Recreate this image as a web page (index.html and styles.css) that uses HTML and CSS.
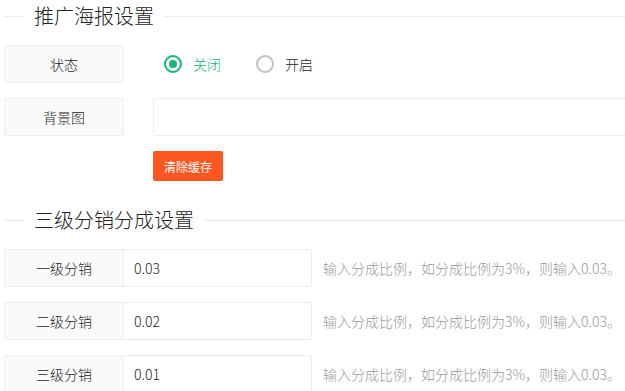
FILE: index.html
```html
<!DOCTYPE html>
<html lang="zh-CN">
<head>
    <meta charset="UTF-8">
    <meta name="viewport" content="width=device-width, initial-scale=1.0">
    <title>推广设置</title>
    <link rel="stylesheet" href="styles.css">
</head>
<body>

    <div class="page">
        <!-- 推广海报 -->
        <div class="field-title"><span>推广海报设置</span></div>

        <div class="form-item">
            <label class="form-label">状态</label>
            <div class="radio-group">
                <span class="radio checked"><i class="radio-icon"></i>关闭</span>
                <span class="radio"><i class="radio-icon"></i>开启</span>
            </div>
        </div>

        <div class="form-item">
            <label class="form-label">背景图</label>
            <div class="input-block">
                <input type="text" class="input wide">
            </div>
        </div>

        <div class="form-item btn-row">
            <button class="btn btn-danger">清除缓存</button>
        </div>

        <!-- 三级分销 -->
        <div class="field-title"><span>三级分销分成设置</span></div>

        <div class="form-item">
            <label class="form-label">一级分销</label>
            <input type="text" class="input rate" value="0.03">
            <div class="form-mid">输入分成比例，如分成比例为3%，则输入0.03。</div>
        </div>

        <div class="form-item">
            <label class="form-label">二级分销</label>
            <input type="text" class="input rate" value="0.02">
            <div class="form-mid">输入分成比例，如分成比例为3%，则输入0.03。</div>
        </div>

        <div class="form-item">
            <label class="form-label">三级分销</label>
            <input type="text" class="input rate" value="0.01">
            <div class="form-mid">输入分成比例，如分成比例为3%，则输入0.03。</div>
        </div>
    </div>

</body>
</html>
```

FILE: styles.css
```css
/* General */
* {
    margin: 0;
    padding: 0;
    box-sizing: border-box;
}

html, body {
    overflow: hidden;
}

body {
    background: #fff;
    color: #1e1e1e;
    font-family: "Noto Sans CJK SC", "Liberation Sans", sans-serif;
    font-size: 14px;
    font-weight: 300;
}

.page {
    padding: 2px 0 0 4px;
    width: 640px;
}

/* Section title with line */
.field-title {
    display: flex;
    align-items: center;
    height: 28px;
    margin-bottom: 15px;
}

.field-title::before,
.field-title::after {
    content: "";
    border-top: 1px solid #eee;
}

.field-title::before {
    width: 20px;
}

.field-title::after {
    flex: 1;
}

.field-title span {
    padding: 0 10px;
    font-size: 20px;
    line-height: 28px;
    font-weight: 300;
    color: #222;
}

/* Form rows */
.form-item {
    display: flex;
    align-items: center;
    height: 38px;
    margin-bottom: 15px;
}

.form-label {
    width: 120px;
    height: 38px;
    line-height: 36px;
    text-align: center;
    background: #fafafa;
    border: 1px solid #eee;
    border-radius: 2px;
    flex-shrink: 0;
}

.input {
    height: 38px;
    border: 1px solid #eee;
    border-radius: 2px;
    padding-left: 10px;
    font-family: inherit;
    font-size: 14px;
    font-weight: 300;
    color: #1e1e1e;
    outline: none;
}

.input-block {
    flex: 1;
    margin-left: 29px;
}

.input.wide {
    width: 100%;
}

.input.rate {
    width: 189px;
    margin-left: -1px;
}

.form-mid {
    margin-left: 11px;
    color: #999;
    white-space: nowrap;
}

/* Radio */
.radio-group {
    display: flex;
    margin-left: 40px;
}

.radio {
    display: flex;
    align-items: center;
    margin-right: 35px;
    cursor: pointer;
}

.radio-icon {
    width: 18px;
    height: 18px;
    border: 2px solid #c2c2c2;
    border-radius: 50%;
    margin-right: 11px;
    display: flex;
    align-items: center;
    justify-content: center;
}

.radio.checked {
    color: #16b777;
}

.radio.checked .radio-icon {
    border-color: #16b777;
}

.radio.checked .radio-icon::after {
    content: "";
    width: 8px;
    height: 8px;
    border-radius: 50%;
    background: #16b777;
}

/* Button */
.btn-row {
    height: 30px;
    padding-left: 149px;
    margin-bottom: 25px;
}

.btn {
    height: 30px;
    padding: 0 11px;
    border: none;
    border-radius: 2px;
    font-family: inherit;
    font-size: 12px;
    font-weight: 400;
    color: #fff;
    cursor: pointer;
}

.btn-danger {
    background: #ff5722;
}
```
